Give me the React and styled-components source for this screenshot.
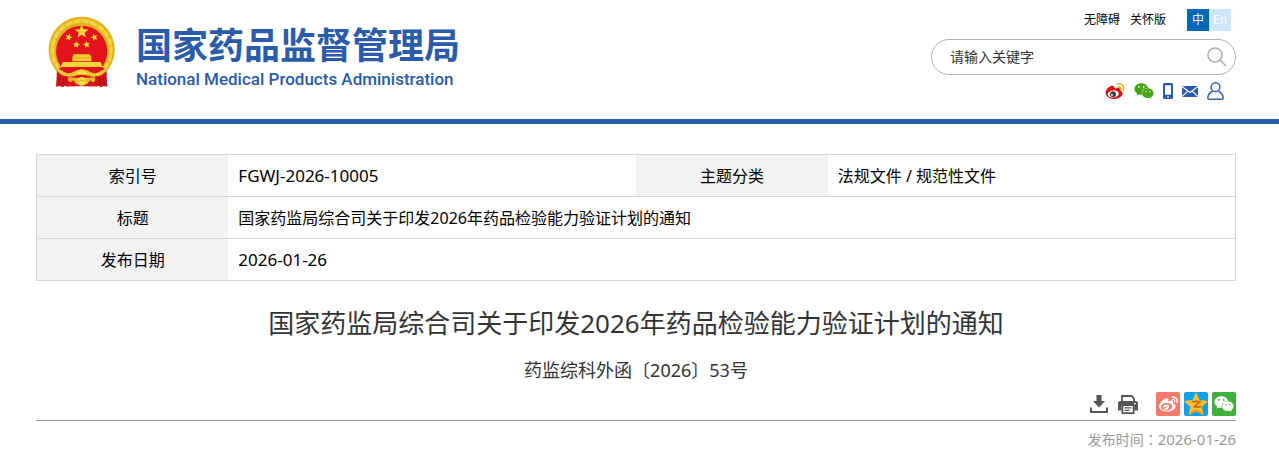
import React from 'react';
import styled, { createGlobalStyle } from 'styled-components';
import { FaWeixin, FaWeibo } from 'react-icons/fa';

const star = (cx, cy, r, turn = 0) => {
  const points = [];
  for (let i = 0; i < 10; i++) {
    const radius = i % 2 === 0 ? r : r * 0.45;
    const angle = ((i * 36 - 90 + turn) * Math.PI) / 180;
    points.push(`${(cx + radius * Math.cos(angle)).toFixed(1)},${(cy + radius * Math.sin(angle)).toFixed(1)}`);
  }
  return points.join(' ');
}

const Emblem = () => (
  <svg width="68" height="72" viewBox="0 0 204 216" role="img" aria-label="国徽">
    <path d="M101 2a99 99 0 0 1 74 165l-20 22H47l-20-22A99 99 0 0 1 101 2z" fill="#e3b31f" />
    <path d="M34 160a88 88 0 1 1 134 0" fill="none" stroke="#f3d444" strokeWidth="10" strokeDasharray="22 3" />
    <circle cx="101" cy="106" r="77" fill="#e3131b" />
    <polygon points={star(101, 47, 21)} fill="#fbdc33" />
    <polygon points={star(62, 64, 11, 20)} fill="#fbdc33" />
    <polygon points={star(139, 64, 11, -20)} fill="#fbdc33" />
    <polygon points={star(85, 86, 11, 10)} fill="#fbdc33" />
    <polygon points={star(116, 86, 11, -10)} fill="#fbdc33" />
    <path d="M77 115h49l4 10v11H73v-11z" fill="#f2cc35" />
    <path d="M72 125h59" stroke="#d9a01c" strokeWidth="2" />
    <path d="M44 138h114l6 15H38z" fill="#f7d53a" />
    <path d="M34 155h134l8 20-28 36H54l-28-36z" fill="#dc151b" />
    <path d="M30 158c10 2 18 12 30 14 14 0 24-12 41-12s27 12 41 12c12-2 20-12 30-14l4 8c-10 12-24 16-38 16-12 0-22-6-37-6s-25 6-37 6c-14 0-28-4-38-16z" fill="#efc730" />
    <path d="M62 184q20 2 39 2t39-2l4 9-18 12H76l-18-12z" fill="#eabf2b" />
    <circle cx="101" cy="196" r="13" fill="#f9dc48" />
    <path d="M86 170l15-9 15 9-8 5H94z" fill="#f9dc48" />
    <path d="M88 199q13-13 26 0" fill="none" stroke="#c98d16" strokeWidth="3" strokeDasharray="3 2" />
    <path d="M27 164q12 16 33 19v29l-9-3-7 5-10-4-10 2z" fill="#d0141a" />
    <path d="M175 164q-12 16-33 19v29l9-3 7 5 10-4 10 2z" fill="#d0141a" />
    <path d="M36 182l-4 27M48 187l-3 23M166 182l4 27M154 187l3 23" stroke="#9f1016" strokeWidth="3" />
    <path d="M60 205l16-12 10 13-7 5H60zM142 205l-16-12-10 13 7 5h19z" fill="#dc151b" />
  </svg>
);

const SearchIcon = () => (
  <svg width="20" height="20" viewBox="0 0 20 20" fill="none" stroke="#b0b0b0" strokeWidth="1.6">
    <circle cx="8" cy="8" r="7" />
    <path d="M13 13l6 6" />
  </svg>
);

const WeiboIcon = () => (
  <svg width="20" height="18" viewBox="0 0 20 18">
    <path d="M9 5C7.600 2 2.500 5.200.8 9.300-.6 13 3.500 17 8.500 17c5 0 9-2.800 9-5.600 0-1.500-1.100-2.200-2.400-2.600.8-2.800-1.700-3.400-5-2.300z" fill="#e0070d" />
    <ellipse cx="8.200" cy="12" rx="5.600" ry="3.600" transform="rotate(-8 8.200 12)" fill="#fff" />
    <circle cx="8" cy="12.200" r="3" fill="#4a4040" />
    <circle cx="7" cy="12.900" r=".9" fill="#fff" />
    <path d="M12.500 2c4-1.200 7 2 5.800 6M13 5c2-.5 3.400 1 2.800 3" fill="none" stroke="#f0ad13" strokeWidth="1.600" strokeLinecap="round" />
  </svg>
);

const PhoneIcon = () => (
  <svg width="10" height="16" viewBox="0 0 10 16">
    <rect width="10" height="16" rx="1.600" fill="#2b5bad" />
    <path d="M2 2.300h6v9.400H2z" fill="#fff" />
    <circle cx="5" cy="13.800" r=".9" fill="#fff" />
  </svg>
);

const MailIcon = () => (
  <svg width="16" height="11" viewBox="0 0 16 11">
    <path d="M0 0h16v11H0z" fill="#2b5bad" />
    <path d="M0 .5l8 6 8-6M0 10.500l5.600-5.200M16 10.500l-5.600-5.200" fill="none" stroke="#fff" strokeWidth="1.100" />
  </svg>
);

const UserIcon = () => (
  <svg width="17" height="18" viewBox="0 0 17 18" fill="none" stroke="#3f61ad" strokeWidth="1.500">
    <circle cx="8.500" cy="5.200" r="4.400" />
    <path d="M5.600 9.300C2.600 10.600.9 13.200.9 16.200q0 1 1 1h13.200q1 0 1-1c0-3-1.700-5.600-4.700-6.900" />
  </svg>
);

const DownloadIcon = () => (
  <svg width="18" height="18" viewBox="0 0 18 18" fill="#555">
    <path d="M6.500 0h5v6H15L9 12.500 3 6h3.500z" />
    <path d="M0 12.500h2V16h14v-3.500h2V18H0z" />
  </svg>
);

const PrintIcon = () => (
  <svg width="20" height="19" viewBox="0 0 20 19">
    <path d="M4 6V1h9.500L16 3.500V6" fill="none" stroke="#555" strokeWidth="1.800" />
    <path d="M2 6h16q2 0 2 2v7.500h-3.500V11h-13v4.500H0V8q0-2 2-2z" fill="#555" />
    <circle cx="17" cy="8.600" r=".9" fill="#fff" />
    <path d="M4.400 11v7.100h11.200V11" fill="none" stroke="#555" strokeWidth="1.800" />
    <path d="M6.500 12.800h7M6.500 15.300h5" stroke="#555" strokeWidth="1.300" />
  </svg>
);

const QzoneIcon = () => (
  <svg width="24" height="24" viewBox="0 0 24 24">
    <polygon points={star(12, 13, 11)} fill="#fdc12d" stroke="#fdc12d" strokeWidth="1.800" strokeLinejoin="round" />
    <path d="M8 9.800q4-.8 8 0l-5.500 4.800q3 .6 6.500 0" fill="none" stroke="#c9640b" strokeWidth="1.600" />
    <path d="M5.500 21.800l6.500-3.600 6.500 3.600" fill="none" stroke="#e98c14" strokeWidth="1.200" />
  </svg>
);

const records = [
  [
    { label: '索引号', value: 'FGWJ-2026-10005', code: true },
    { label: '主题分类', value: '法规文件 / 规范性文件' },
  ],
  [{ label: '标题', value: '国家药监局综合司关于印发2026年药品检验能力验证计划的通知' }],
  [{ label: '发布日期', value: '2026-01-26', code: true }],
];

const App = () => (
  <>
    <GlobalStyle />
    <Header>
      <Brand href="#">
        <Emblem />
        <BrandText>
          <BrandName>国家药品监督管理局</BrandName>
          <BrandEnglish>National Medical Products Administration</BrandEnglish>
        </BrandText>
      </Brand>
      <Tools>
        <TopLinks>
          <TopLink href="#">无障碍</TopLink>
          <TopLink href="#">关怀版</TopLink>
          <Languages>
            <Language href="#" $active>中</Language>
            <Language href="#">En</Language>
          </Languages>
        </TopLinks>
        <Search onSubmit={e => e.preventDefault()}>
          <SearchInput type="text" aria-label="搜索" placeholder="请输入关键字" />
          <IconButton type="submit" aria-label="搜索"><SearchIcon /></IconButton>
        </Search>
        <Contacts>
          <IconLink href="#" aria-label="微博"><WeiboIcon /></IconLink>
          <IconLink href="#" aria-label="微信"><FaWeixin size={20} color="#45a516" /></IconLink>
          <IconLink href="#" aria-label="手机"><PhoneIcon /></IconLink>
          <IconLink href="#" aria-label="邮箱"><MailIcon /></IconLink>
          <IconLink href="#" aria-label="个人中心"><UserIcon /></IconLink>
        </Contacts>
      </Tools>
    </Header>

    <Main>
      <InfoTable>
        <colgroup>
          <col width="16%" />
          <col width="34%" />
          <col width="16%" />
          <col width="34%" />
        </colgroup>
        <tbody>
          {records.map(row => (
            <InfoRow key={row[0].label}>
              {row.map(({ label, value, code }) => (
                <React.Fragment key={label}>
                  <InfoLabel scope="row">{label}</InfoLabel>
                  <InfoValue colSpan={row.length === 1 ? 3 : 1} $code={code}>{value}</InfoValue>
                </React.Fragment>
              ))}
            </InfoRow>
          ))}
        </tbody>
      </InfoTable>

      <Title>国家药监局综合司关于印发2026年药品检验能力验证计划的通知</Title>
      <DocNumber>药监综科外函〔2026〕53号</DocNumber>

      <Actions>
        <ActionGroup $gap="10px">
          <IconButton type="button" aria-label="下载"><DownloadIcon /></IconButton>
          <IconButton type="button" aria-label="打印"><PrintIcon /></IconButton>
        </ActionGroup>
        <ActionGroup $gap="4px">
          <Share href="#" aria-label="分享到微博" $color="#f5796c"><FaWeibo size={19} /></Share>
          <Share href="#" aria-label="分享到QQ空间" $color="#109fe9"><QzoneIcon /></Share>
          <Share href="#" aria-label="分享到微信" $color="#3fb13b"><FaWeixin size={20} /></Share>
        </ActionGroup>
      </Actions>
      <Published>发布时间<Colon>：</Colon><PublishedDate>2026-01-26</PublishedDate></Published>
    </Main>
  </>
);

const GlobalStyle = createGlobalStyle`
  * {
    box-sizing: border-box;
  }
  body {
    margin: 0;
    background: #fff;
    color: #000;
    font-family: "Noto Sans", "Noto Sans CJK SC", sans-serif;
    font-size: 16px;
  }
  a {
    color: inherit;
    text-decoration: none;
  }
  svg {
    display: block;
  }
`

const
  Header = styled.header`
    display: flex;
    justify-content: space-between;
    align-items: flex-start;
    padding: 9px 43px 0 48px;
    min-height: 124px;
    border-bottom: 5px solid #2b5bab;
  `,
  Brand = styled.a`
    display: flex;
    gap: 20px;
    padding-top: 7px;
    color: #2b5bab;
  `,
  BrandText = styled.span`
    display: flex;
    flex-direction: column;
    padding-top: 6px;
    white-space: nowrap;
  `,
  BrandName = styled.strong`
    font-family: "Noto Sans CJK SC", sans-serif;
    font-size: 36px;
    line-height: 42px;
    font-weight: 700;
  `,
  BrandEnglish = styled.span`
    font-family: Roboto, sans-serif;
    font-size: 17px;
    line-height: 30px;
    font-weight: 500;
  `,
  Tools = styled.div`
    display: flex;
    flex-direction: column;
    width: 305px;
  `,
  TopLinks = styled.nav`
    display: flex;
    justify-content: flex-end;
    align-items: center;
    gap: 10px;
    padding-right: 5px;
    font-size: 12px;
    line-height: 22px;
  `,
  TopLink = styled.a``,
  Languages = styled.div`
    display: flex;
    margin-left: 11px;
  `,
  Language = styled.a`
    width: 22px;
    height: 22px;
    text-align: center;
    color: #fff;
    background: ${props => props.$active ? '#0068b7' : '#cce8ff'};
  `,
  Search = styled.form`
    display: flex;
    align-items: center;
    height: 36px;
    margin-top: 8px;
    padding: 0 8px 0 18px;
    border: 1px solid #b0b0b0;
    border-radius: 18px;
  `,
  SearchInput = styled.input`
    flex: 1;
    min-width: 0;
    padding: 0;
    border: 0;
    outline: 0;
    background: none;
    font-family: inherit;
    font-size: 14px;
    line-height: 20px;

    &::placeholder {
      color: #333;
      opacity: 1;
    }
  `,
  IconButton = styled.button`
    padding: 0;
    border: 0;
    background: none;
    cursor: pointer;
  `,
  Contacts = styled.div`
    display: flex;
    justify-content: flex-end;
    align-items: center;
    gap: 9px;
    padding: 6px 12px 0 0;
  `,
  IconLink = styled.a`
    display: block;
  `

const
  Main = styled.main`
    padding: 30px 43px 20px 36px;
  `,
  InfoTable = styled.table`
    width: 100%;
    table-layout: fixed;
    border-collapse: collapse;
    border: 1px solid #d6d6d6;
  `,
  InfoRow = styled.tr`
    height: 42px;
    border-bottom: 1px solid #d6d6d6;
  `,
  InfoLabel = styled.th`
    padding: 0 0 2px;
    background: #f2f2f2;
    font-weight: 400;
    text-align: center;
  `,
  InfoValue = styled.td`
    padding: ${props => props.$code ? '0 10px' : '0 10px 2px'};
    font-size: ${props => props.$code ? '17px' : '16px'};
  `,
  Title = styled.h1`
    margin: 22px 0 0;
    color: #333;
    font-size: 26px;
    line-height: 40px;
    font-weight: 400;
    text-align: center;
  `,
  DocNumber = styled.p`
    margin: 13px 0 0;
    color: #333;
    font-size: 18px;
    line-height: 28px;
    text-align: center;
  `,
  Actions = styled.div`
    display: flex;
    justify-content: flex-end;
    align-items: center;
    gap: 18px;
    margin-top: 8px;
    padding-bottom: 4px;
    border-bottom: 1px solid #999;
  `,
  ActionGroup = styled.div`
    display: flex;
    align-items: center;
    gap: ${props => props.$gap};
  `,
  Share = styled.a`
    display: flex;
    align-items: center;
    justify-content: center;
    width: 24px;
    height: 24px;
    border-radius: 2px;
    color: #fff;
    background: ${props => props.$color};
  `,
  Published = styled.p`
    margin: 7px 0 0;
    color: #999;
    font-size: 14px;
    line-height: 22px;
    text-align: right;
  `,
  Colon = styled.span`
    font-family: "Noto Sans CJK TC", sans-serif;
  `,
  PublishedDate = styled.time`
    font-size: 15px;
  `


export default App;
